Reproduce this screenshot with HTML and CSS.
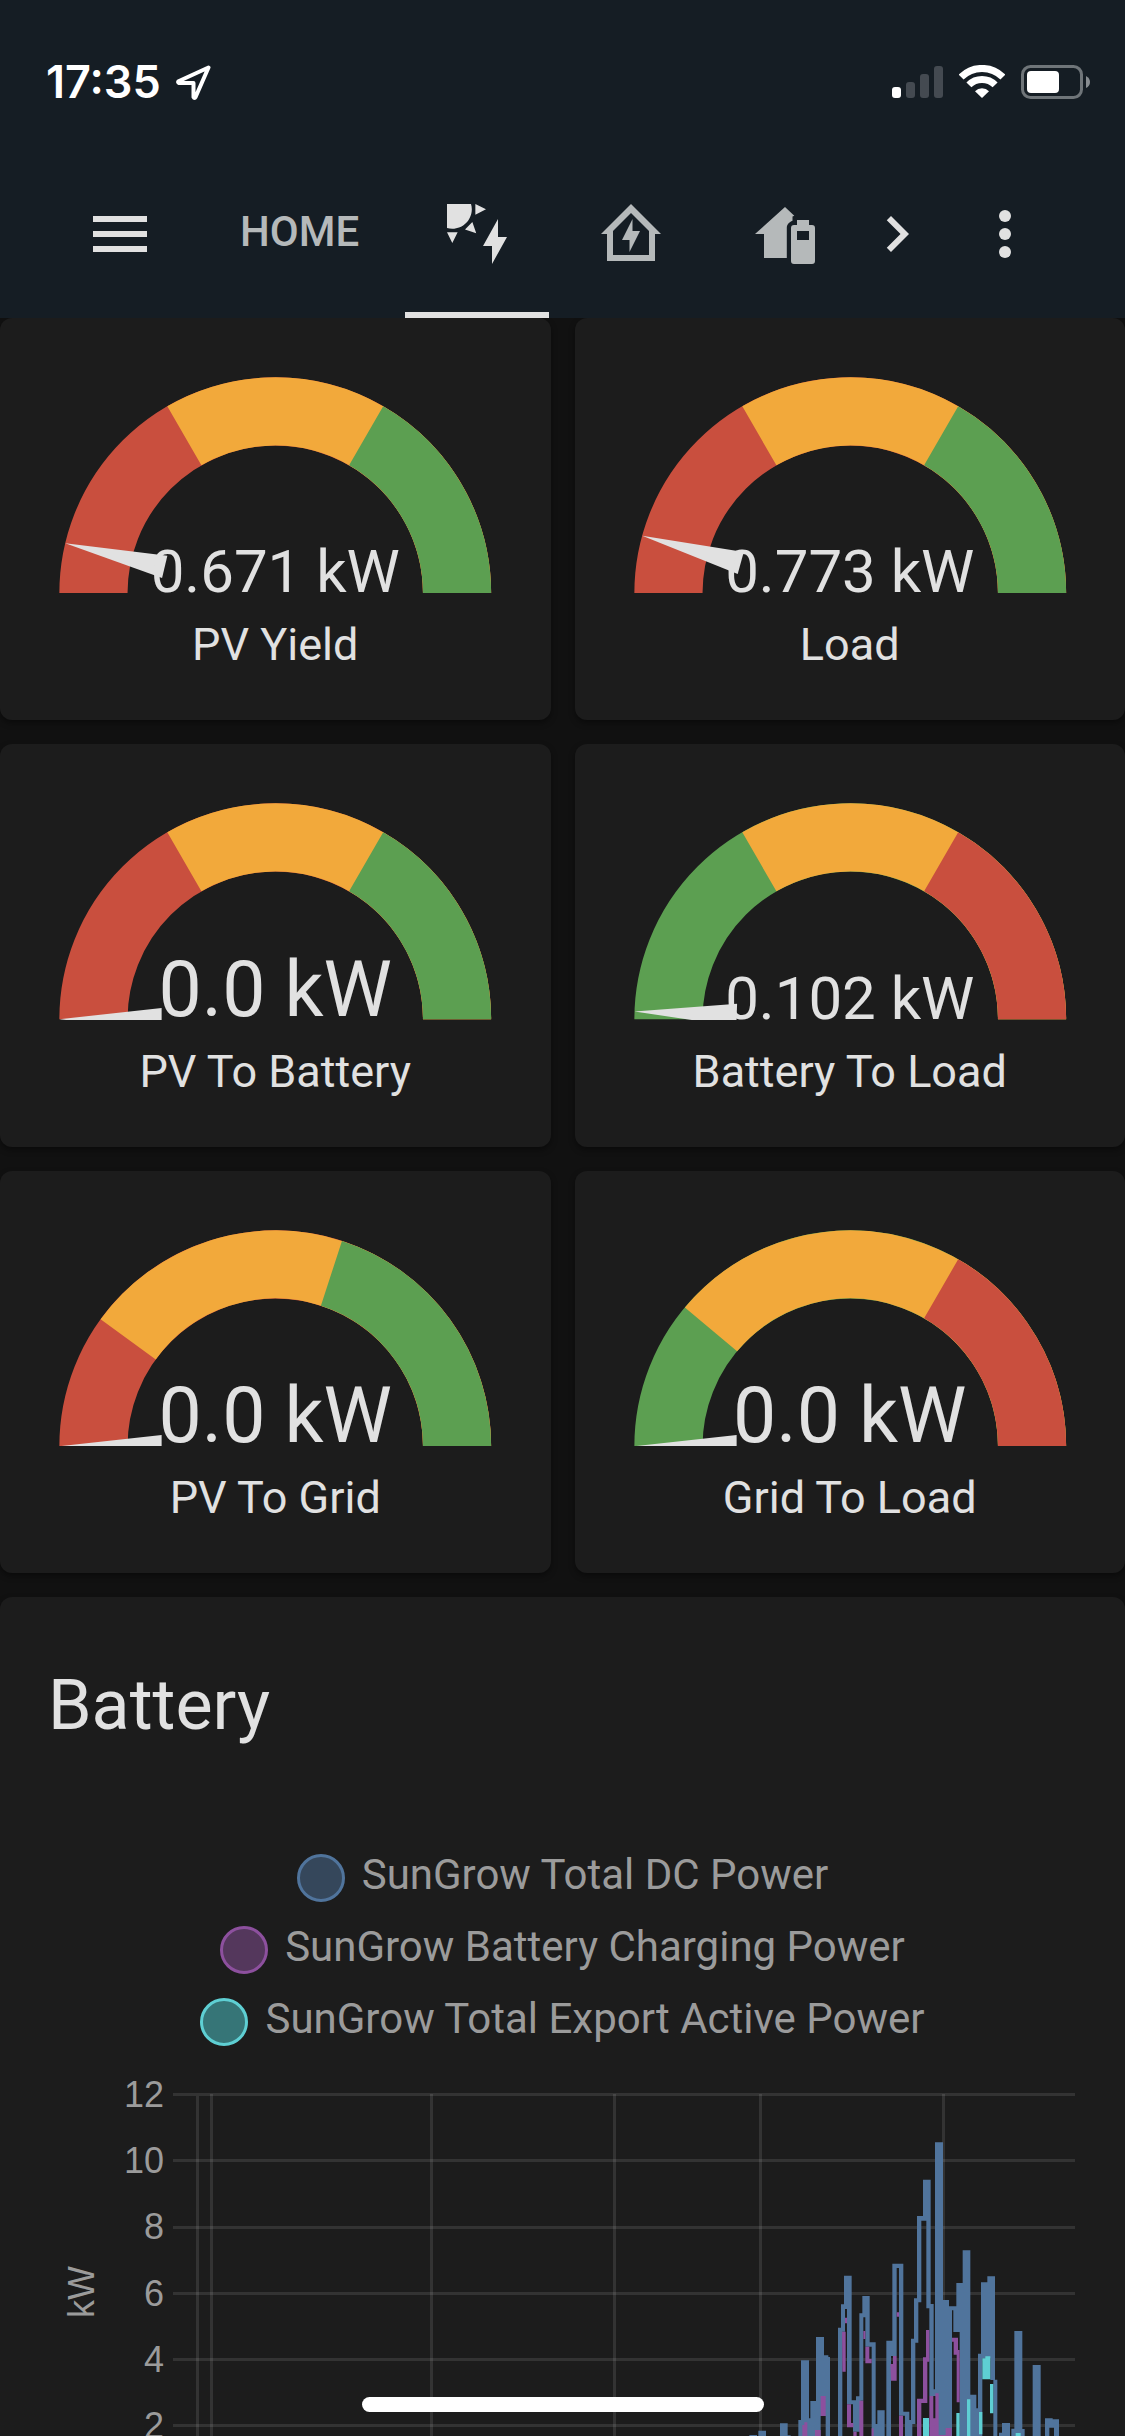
FILE: index.html
```html
<!DOCTYPE html>
<html lang="en">
<head>
<meta charset="utf-8">
<meta name="viewport" content="width=device-width">
<title>Energy</title>
<link rel="stylesheet" href="styles.css">
</head>
<body>
<header class="header">
  <div class="status">
    <div class="status-left">
      <span class="clock">17:35</span>
      <svg class="location" viewBox="0 0 35 35" width="35" height="35"><path d="M32.5 2.5L2.5 16.2Q1.5 17.5 3 18H17.500V32Q18.500 34 19.600 32Z" fill="none" stroke="#fff" stroke-width="4" stroke-linejoin="round"/></svg>
    </div>
    <div class="status-right">
      <svg viewBox="0 0 51 34" width="51" height="34"><g fill="#444a51"><rect x="14" y="17" width="9" height="16" rx="3"/><rect x="28" y="9" width="9" height="24" rx="3"/><rect x="42" y="1" width="9" height="32" rx="3"/></g><rect y="22" width="9" height="11" rx="3" fill="#fff"/></svg>
      <svg viewBox="0 0 46 34" width="46" height="34"><g fill="none" stroke="#fff" stroke-width="7"><path d="M2.100 12.100A29.500 29.500 0 0 1 43.900 12.100"/><path d="M9.900 19.900A18.500 18.500 0 0 1 36.100 19.900"/></g><path d="M23 33L16 26.200A10 10 0 0 1 30 26.200Z" fill="#fff"/></svg>
      <svg viewBox="0 0 70 34" width="70" height="34"><rect x="1.500" y="1.500" width="59" height="31" rx="8" fill="none" stroke="#6f7579" stroke-width="3"/><rect x="6" y="6" width="32" height="22" rx="4" fill="#fff"/><path d="M65 11Q69 13 69 17Q69 21 65 23Z" fill="#888d91"/></svg>
    </div>
  </div>
  <div class="toolbar">
    <button class="icon-button" aria-label="Menu"><svg class="icon" viewBox="0 0 24 24"><path d="M3 6H21V8H3V6M3 11H21V13H3V11M3 16H21V18H3V16Z"/></svg></button>
    <nav class="tabs">
      <a class="tab" href="#home">HOME</a>
      <a class="tab tab-active" href="#solar" aria-label="Solar"><svg class="icon" viewBox="0 0 24 24"><path d="M11.450 2V5.550L15 3.770L11.450 2M10.450 8L8 10.460L11.750 11.710L10.450 8M2 11.450L3.770 15L5.550 11.450H2M10 2H2V10C2.570 10.170 3.170 10.250 3.770 10.250C7.350 10.260 10.260 7.350 10.270 3.750C10.260 3.160 10.170 2.570 10 2M17 22V16H14L19 7V13H22L17 22Z"/></svg></a>
      <a class="tab" href="#energy" aria-label="Energy"><svg class="icon" viewBox="0 0 24 24"><path fill-rule="evenodd" d="M12 2L22 12H20V21H4V12H2L12 2M12 5L6 11V19H18V11L12 5M12.500 7V11H15L11.500 18V14H9L12.500 7Z"/></svg></a>
      <a class="tab" href="#battery" aria-label="Battery"><svg class="icon" viewBox="0 0 24 24"><path fill-rule="evenodd" d="M12 3L15.100 5.900L14.500 6.200V7.600C13.400 8 12.600 8.900 12.600 10V20H5V12H2L12 3M16 9V7.300H20V9H21Q22 9 22 10V21Q22 22 21 22H15Q14 22 14 21V10Q14 9 15 9H16M16 11V14H20V11H16Z"/></svg></a>
    </nav>
    <button class="icon-button" aria-label="Scroll tabs"><svg class="icon" viewBox="0 0 24 24"><path d="M8.590 16.580L13.170 12L8.590 7.410L10 6L16 12L10 18L8.590 16.580Z"/></svg></button>
    <button class="icon-button more" aria-label="More"><svg class="icon" viewBox="0 0 24 24"><circle cx="12" cy="6" r="2"/><circle cx="12" cy="12" r="2"/><circle cx="12" cy="18" r="2"/></svg></button>
  </div>
</header>

<main class="view">
  <div class="gauges">
    <section class="card gauge">
      <div class="dial">
        <svg viewBox="-50 -50 100 50"><g class="arc"><path class="red" d="M-40 0A40 40 0 0 1 40 0"/><path class="yellow" d="M-20 -34.641A40 40 0 0 1 40 0"/><path class="green" d="M20 -34.641A40 40 0 0 1 40 0"/></g><path class="needle" transform="rotate(13.420)" d="M-25 -2.500L-47.500 0L-25 2.500Z"/></svg>
        <span class="value">0.671 kW</span>
      </div>
      <h2 class="name">PV Yield</h2>
    </section>
    <section class="card gauge">
      <div class="dial">
        <svg viewBox="-50 -50 100 50"><g class="arc"><path class="red" d="M-40 0A40 40 0 0 1 40 0"/><path class="yellow" d="M-20 -34.641A40 40 0 0 1 40 0"/><path class="green" d="M20 -34.641A40 40 0 0 1 40 0"/></g><path class="needle" transform="rotate(15.460)" d="M-25 -2.500L-47.500 0L-25 2.500Z"/></svg>
        <span class="value">0.773 kW</span>
      </div>
      <h2 class="name">Load</h2>
    </section>
    <section class="card gauge">
      <div class="dial">
        <svg viewBox="-50 -50 100 50"><g class="arc"><path class="red" d="M-40 0A40 40 0 0 1 40 0"/><path class="yellow" d="M-20 -34.641A40 40 0 0 1 40 0"/><path class="green" d="M20 -34.641A40 40 0 0 1 40 0"/></g><path class="needle" d="M-25 -2.500L-47.500 0L-25 2.500Z"/></svg>
        <span class="value value-large">0.0 kW</span>
      </div>
      <h2 class="name">PV To Battery</h2>
    </section>
    <section class="card gauge">
      <div class="dial">
        <svg viewBox="-50 -50 100 50"><g class="arc"><path class="green" d="M-40 0A40 40 0 0 1 40 0"/><path class="yellow" d="M-20 -34.641A40 40 0 0 1 40 0"/><path class="red" d="M20 -34.641A40 40 0 0 1 40 0"/></g><path class="needle" transform="rotate(2.040)" d="M-25 -2.500L-47.500 0L-25 2.500Z"/></svg>
        <span class="value">0.102 kW</span>
      </div>
      <h2 class="name">Battery To Load</h2>
    </section>
    <section class="card gauge">
      <div class="dial">
        <svg viewBox="-50 -50 100 50"><g class="arc"><path class="red" d="M-40 0A40 40 0 0 1 40 0"/><path class="yellow" d="M-32.361 -23.511A40 40 0 0 1 40 0"/><path class="green" d="M12.361 -38.042A40 40 0 0 1 40 0"/></g><path class="needle" d="M-25 -2.500L-47.500 0L-25 2.500Z"/></svg>
        <span class="value value-large">0.0 kW</span>
      </div>
      <h2 class="name">PV To Grid</h2>
    </section>
    <section class="card gauge">
      <div class="dial">
        <svg viewBox="-50 -50 100 50"><g class="arc"><path class="green" d="M-40 0A40 40 0 0 1 40 0"/><path class="yellow" d="M-30.642 -25.712A40 40 0 0 1 40 0"/><path class="red" d="M20 -34.641A40 40 0 0 1 40 0"/></g><path class="needle" d="M-25 -2.500L-47.500 0L-25 2.500Z"/></svg>
        <span class="value value-large">0.0 kW</span>
      </div>
      <h2 class="name">Grid To Load</h2>
    </section>
  </div>

  <section class="card history">
    <h1 class="title">Battery</h1>
    <ul class="legend">
      <li><span class="dot dot-dc"></span>SunGrow Total DC Power</li>
      <li><span class="dot dot-charge"></span>SunGrow Battery Charging Power</li>
      <li><span class="dot dot-export"></span>SunGrow Total Export Active Power</li>
    </ul>
    <svg class="chart" viewBox="0 0 1125 400">
      <g class="grid">
        <path d="M173 34.500H1075M173 100.500H1075M173 167.500H1075M173 233.500H1075M173 299.500H1075M173 365.500H1075"/>
        <path d="M197.500 36V400M211.500 34V400M431.500 34V400M614.500 34V400M760.500 34V400M943.500 34V400"/>
      </g>
      <g class="ticks">
        <text x="164" y="47">12</text>
        <text x="164" y="113">10</text>
        <text x="164" y="179">8</text>
        <text x="164" y="246">6</text>
        <text x="164" y="312">4</text>
        <text x="164" y="378">2</text>
      </g>
      <text class="unit" transform="translate(94 258) rotate(-90)">kW</text>
      <svg class="series" x="700" y="0" width="425" height="376" viewBox="0 0 1275 1128">
        <path fill="#50749c" d="M148 1128V1125H171V1128ZM175 1128V1112H198V1128ZM240 1128V1090H263V1126H272V1128Z
          M295 1128V1080H303V901H327V1075H331V1023H348V831H372V886H385V891H390V1128H377V1068H362V1128Z
          M414 1128V803H423V733H432V647H455V1021H468V1009H478V760H487V708H509V847H527V1092H532V1051H554V1128H515V860H496V772H490V1022H482V1115H459V1033H441V747H435V815H427V1128Z
          M559 1128V842H577V611H610V1055H628V1080H633V836H642V715H651V468H669V359H692V732H701V988H705V247H729V720H747V739H769V669H788V571H811V1004H829V1045H834V881H843V667H862V649H885V959H892V1128H880V960H871V895H847V1128H779V816H760V751H756V1128H714V1008H688V745H679V482H664V727H655V848H646V1092H637V1128H615V1067H597V624H590V888H573V1128Z
          M897 1128V1118H906V1089H930V1128ZM934 1128V1106H943V813H967V1107H974V1128ZM998 1128V915H1022V1128ZM1035 1128V1075H1058V1078H1077V1128H1062V1103H1048V1128Z"/>
        <path fill="#8d509e" d="M307 1128V1095H313V1087H322V1128ZM345 1128V1110H362V1128ZM362 1008H377V1068H362ZM426 815H437V935H427ZM435 773H441V790H435ZM441 1033H453V1089H460V1102H441ZM460 1115H470V1128H460ZM478 1022H490V1128H478ZM490 813H496V837H490ZM496 860H508V897H515V910H496ZM515 1105H521V1128H515ZM571 912H579V888H590V962H573ZM590 757H597V770H590ZM597 1067H609V1128H597ZM651 1128V1016H669V892H678V810H688V905H682V1029H664V1128ZM688 1008H700V1075H706V1000H716V1128H688ZM716 1125H737V1104H755V1128H716ZM756 833H774V870H779V1027H770V884H761V845H756Z"/>
        <path fill="#5ecfd3" d="M669 1074H687V1128H669ZM769 1059H779V1128H769ZM801 1018H811V1128H801ZM837 1056H847V1123H837ZM847 895H856V889H871V958H847ZM870 972H880V1060H870ZM947 1119H962V1128H947Z"/>
      </svg>
    </svg>
  </section>
</main>
<div class="home-indicator"></div>
</body>
</html>
```
FILE: styles.css
```css
* { box-sizing: border-box; }

body {
  margin: 0;
  height: 100vh;
  overflow: hidden;
  display: flex;
  flex-direction: column;
  background: #111111;
  color: #e1e1e1;
  font-family: Roboto, "Noto Sans", sans-serif;
}

svg { display: block; }

.header { background: #151d24; flex: none; }

.status {
  height: 150px;
  padding: 65px 34px 0 46px;
  display: flex;
  justify-content: space-between;
  align-items: flex-start;
}
.status-left, .status-right { display: flex; }
.status-left { gap: 15px; }
.status-right { gap: 16px; }
.clock {
  color: #fff;
  font: 600 45px/34px Inter, "Liberation Sans", sans-serif;
}

.toolbar {
  height: 168px;
  padding: 0 84px;
  display: flex;
  align-items: center;
}
.icon { width: 72px; height: 72px; fill: currentColor; }
.icon-button {
  padding: 0;
  border: 0;
  background: none;
  color: #e1e1e1;
  flex: none;
}
.more { margin-left: 36px; }

.tabs {
  flex: 1;
  align-self: stretch;
  margin-left: 48px;
  display: flex;
  gap: 10px;
}
.tab {
  padding: 6px 36px 0;
  display: flex;
  align-items: center;
  color: #b5b9ba;
  font-size: 42px;
  font-weight: 500;
  line-height: 48px;
  text-decoration: none;
  border-bottom: 6px solid transparent;
}
.tab:first-child { padding-top: 2px; }
.tab-active { color: #e1e1e1; border-color: #e1e1e1; }

.view { flex: 1; min-height: 0; overflow: hidden; }

.card {
  background: #1c1c1c;
  border-radius: 12px;
  box-shadow: 0 3px 6px rgba(0, 0, 0, .4);
}

.gauges {
  display: grid;
  grid-template-columns: 1fr 1fr;
  gap: 24px;
  margin-bottom: 24px;
}
.gauge { padding: 48px 48px 47px; text-align: center; }
.dial { position: relative; }
.dial svg { width: 100%; }
.arc { fill: none; stroke-width: 15; }
.red { stroke: #c94f3e; }
.yellow { stroke: #f2a93b; }
.green { stroke: #5c9f51; }
.needle { fill: #e1e1e1; }
.value {
  position: absolute;
  inset: auto 0 0;
  font-size: 60px;
  line-height: 42px;
  white-space: nowrap;
}
.value-large { font-size: 77px; line-height: 60px; }
.name {
  margin: 24px 0 0;
  font-size: 45px;
  font-weight: 400;
  line-height: 56px;
}

.history { padding-top: 64px; }
.title {
  margin: 0;
  padding: 0 48px;
  font-size: 70px;
  font-weight: 400;
  line-height: 88px;
}
.legend {
  list-style: none;
  margin: 105px 0 0;
  padding: 0;
  color: #9b9b9b;
  font-size: 42px;
  line-height: 42px;
}
.legend li {
  display: flex;
  justify-content: center;
  align-items: flex-start;
  gap: 17px;
  margin-bottom: 24px;
}
.dot { width: 48px; height: 48px; border: 3px solid; border-radius: 50%; }
.dot-dc { background: #35475b; border-color: #50749c; }
.dot-charge { background: #54375c; border-color: #8d509e; }
.dot-export { background: #367577; border-color: #5ecfd3; }

.chart { width: 100%; margin-top: -10px; }
.grid { fill: none; stroke: #e1e1e1; stroke-opacity: .12; stroke-width: 3; }
.ticks, .unit {
  fill: #9b9b9b;
  font: 36px "Liberation Sans", sans-serif;
}
.ticks { text-anchor: end; }

.home-indicator {
  position: fixed;
  bottom: 24px;
  left: 50%;
  width: 402px;
  height: 15px;
  border-radius: 8px;
  background: #fff;
  transform: translateX(-50%);
}
```
